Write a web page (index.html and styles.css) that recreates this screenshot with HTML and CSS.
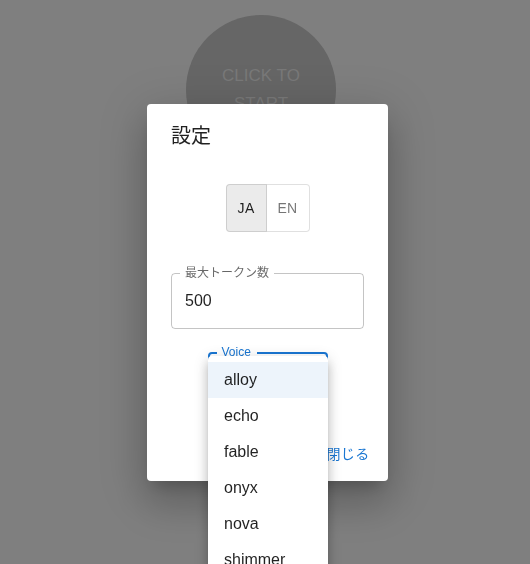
FILE: index.html
```html
<!DOCTYPE html>
<html lang="ja">
<head>
<meta charset="utf-8">
<title>設定</title>
<link rel="stylesheet" href="styles.css">
</head>
<body>
<main class="stage">
  <button class="start-btn">CLICK TO START</button>
</main>

<div class="dialog" role="dialog">
  <h2 class="dialog-title">設定</h2>
  <div class="dialog-content">
    <div class="toggle-group">
      <button class="toggle selected">JA</button>
      <button class="toggle">EN</button>
    </div>
    <div class="field tokens">
      <span class="field-label">最大トークン数</span>
      <span class="field-value">500</span>
    </div>
    <div class="field voice focused">
      <span class="field-label">Voice</span>
      <span class="field-value">alloy</span>
    </div>
  </div>
  <div class="dialog-actions">
    <button class="text-btn">閉じる</button>
  </div>
</div>

<ul class="menu">
  <li class="menu-item active">alloy</li>
  <li class="menu-item">echo</li>
  <li class="menu-item">fable</li>
  <li class="menu-item">onyx</li>
  <li class="menu-item">nova</li>
  <li class="menu-item">shimmer</li>
</ul>
</body>
</html>
```

FILE: styles.css
```css
html, body {
  margin: 0;
  padding: 0;
  overflow: hidden;
  height: 100%;
}

body {
  background: #7f7f7f;
  font-family: "Liberation Sans", "Noto Sans CJK JP", sans-serif;
  color: rgba(0, 0, 0, 0.87);
}

button {
  font-family: inherit;
  cursor: pointer;
}

.stage {
  display: flex;
  justify-content: center;
  padding: 15px 8px 0 0;
}

.start-btn {
  width: 150px;
  height: 150px;
  border-radius: 50%;
  border: none;
  background: #666666;
  color: #797979;
  font-size: 17px;
  line-height: 28px;
  padding: 0 16px;
  text-transform: uppercase;
}

.dialog {
  position: fixed;
  left: 147px;
  top: 104px;
  width: 241px;
  background: #fff;
  border-radius: 4px;
  box-shadow: 0 11px 15px -7px rgba(0,0,0,0.2), 0 24px 38px 3px rgba(0,0,0,0.14), 0 9px 46px 8px rgba(0,0,0,0.12);
  display: flex;
  flex-direction: column;
}

.dialog-title {
  margin: 0;
  padding: 16px 24px;
  font-size: 20px;
  font-weight: 400;
  line-height: 32px;
  color: rgba(0, 0, 0, 0.87);
}

.dialog-content {
  padding: 16px 24px 20px;
  display: flex;
  flex-direction: column;
}

.toggle-group {
  align-self: center;
  display: flex;
  height: 48px;
}

.toggle {
  border: 1px solid rgba(0, 0, 0, 0.12);
  background: transparent;
  padding: 0 11px;
  font-size: 14px;
  font-weight: 400;
  letter-spacing: 0.02857em;
  color: rgba(0, 0, 0, 0.54);
  line-height: 24px;
}

.toggle:first-child {
  border-radius: 4px 0 0 4px;
  width: 41px;
}

.toggle:last-child {
  border-radius: 0 4px 4px 0;
  border-left: none;
  padding: 0 10px;
  width: 43px;
}

.toggle.selected {
  background: #ebebeb;
  color: rgba(0, 0, 0, 0.87);
}

.field {
  position: relative;
  box-sizing: border-box;
  height: 56px;
  border: 1px solid rgba(0, 0, 0, 0.23);
  border-radius: 4px;
  display: flex;
  align-items: center;
  padding: 0 13px;
}

.field.tokens {
  margin-top: 41px;
}

.field.tokens .field-value {
  margin-top: -2px;
}

.field.voice {
  margin-top: 23px;
  width: 120px;
  align-self: center;
  border: 2px solid #1976d2;
  padding: 0 12px;
}

.field-label {
  position: absolute;
  left: 8px;
  top: -9px;
  padding: 0 5px;
  background: #fff;
  font-size: 12px;
  line-height: 17px;
  color: rgba(0, 0, 0, 0.6);
}

.voice .field-label {
  left: 7px;
  top: -10px;
  padding: 0 6px 0 5px;
  color: #1976d2;
}

.field-value {
  font-size: 16px;
  line-height: 23px;
  color: rgba(0, 0, 0, 0.87);
}

.dialog-actions {
  display: flex;
  justify-content: flex-end;
  padding: 8px;
}

.text-btn {
  min-width: 64px;
  padding: 6px 8px;
  border: none;
  background: transparent;
  color: #1976d2;
  font-size: 14px;
  font-weight: 400;
  letter-spacing: 0.02857em;
  line-height: 24.5px;
  border-radius: 4px;
}

.menu {
  position: fixed;
  left: 208px;
  top: 356px;
  width: 120px;
  margin: 0;
  padding: 6px 0 8px;
  list-style: none;
  background: #fff;
  border-radius: 4px;
  box-shadow: 0 5px 5px -3px rgba(0,0,0,0.2), 0 8px 10px 1px rgba(0,0,0,0.14), 0 3px 14px 2px rgba(0,0,0,0.12);
}

.menu-item {
  padding: 6px 16px;
  font-size: 16px;
  line-height: 24px;
  color: rgba(0, 0, 0, 0.87);
}

.menu-item.active {
  background: #edf4fb;
}
```
